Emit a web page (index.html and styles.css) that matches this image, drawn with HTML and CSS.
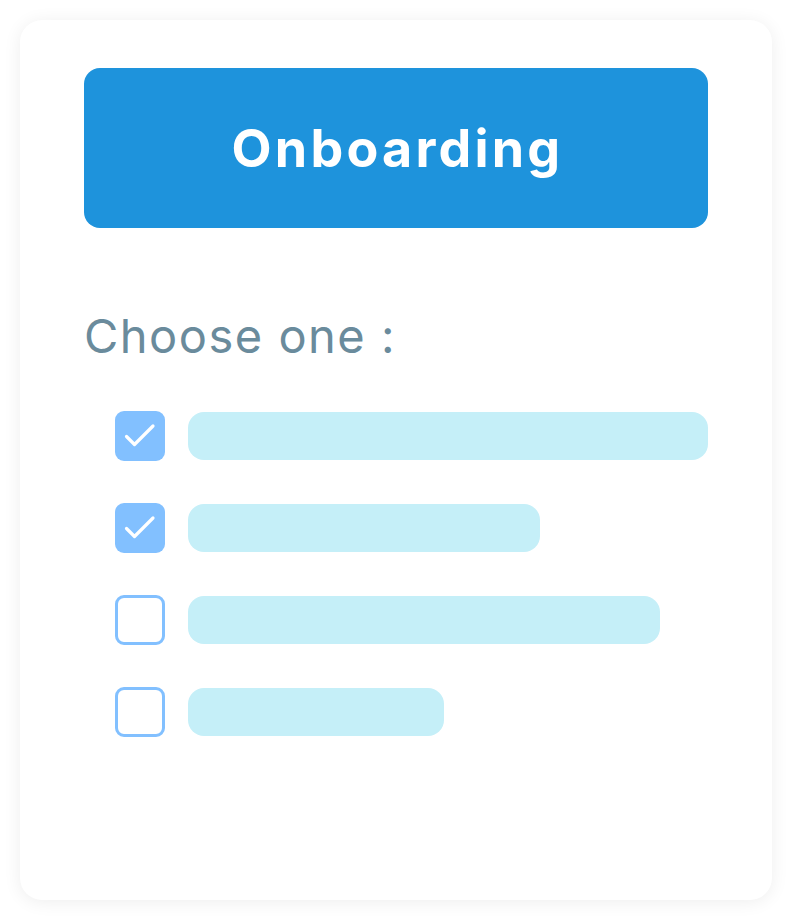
FILE: index.html
```html
<!DOCTYPE html>
<html lang="en">
<head>
<meta charset="utf-8">
<title>Onboarding</title>
<link rel="stylesheet" href="styles.css">
</head>
<body>
<div class="card">
  <div class="banner">Onboarding</div>
  <div class="prompt">Choose one :</div>
  <div class="options">
    <div class="option">
      <span class="box checked"><svg viewBox="0 0 50 50" width="50" height="50"><path d="M11.5 25.5 L19.5 33.5 L38 15" fill="none" stroke="#fff" stroke-width="3.2" stroke-linecap="round" stroke-linejoin="round"/></svg></span>
      <span class="bar" style="width:520px"></span>
    </div>
    <div class="option">
      <span class="box checked"><svg viewBox="0 0 50 50" width="50" height="50"><path d="M11.5 25.5 L19.5 33.5 L38 15" fill="none" stroke="#fff" stroke-width="3.2" stroke-linecap="round" stroke-linejoin="round"/></svg></span>
      <span class="bar" style="width:352px"></span>
    </div>
    <div class="option">
      <span class="box"></span>
      <span class="bar" style="width:472px"></span>
    </div>
    <div class="option">
      <span class="box"></span>
      <span class="bar" style="width:256px"></span>
    </div>
  </div>
</div>
</body>
</html>
```

FILE: styles.css
```css
html, body {
  margin: 0;
  padding: 0;
  background: #ffffff;
}
body {
  padding: 20px;
  font-family: Inter, "Open Sans", sans-serif;
}
.card {
  width: 752px;
  height: 880px;
  box-sizing: border-box;
  background: #ffffff;
  border-radius: 22px;
  box-shadow: 0 2px 18px rgba(0, 0, 0, 0.07);
  padding: 48px 64px;
}
.banner {
  height: 160px;
  border-radius: 16px;
  background: #1e93dc;
  color: #ffffff;
  display: flex;
  align-items: center;
  justify-content: center;
  font-weight: 700;
  font-size: 52px;
  letter-spacing: 3.2px;
  padding-left: 3px;
}
.prompt {
  margin-top: 78px;
  height: 60px;
  line-height: 60px;
  font-size: 47px;
  font-weight: 400;
  color: #6a8b9c;
  letter-spacing: 1.5px;
}
.options {
  margin-top: 45px;
  padding-left: 31px;
  display: flex;
  flex-direction: column;
  gap: 42px;
}
.option {
  display: flex;
  align-items: center;
  gap: 23px;
  height: 50px;
}
.box {
  width: 50px;
  height: 50px;
  box-sizing: border-box;
  border-radius: 9px;
  border: 3.5px solid #82c0ff;
  flex: none;
  display: flex;
}
.box.checked {
  border: none;
  background: #82c0ff;
}
.bar {
  height: 48px;
  border-radius: 16px;
  background: #c5eff8;
}
```
